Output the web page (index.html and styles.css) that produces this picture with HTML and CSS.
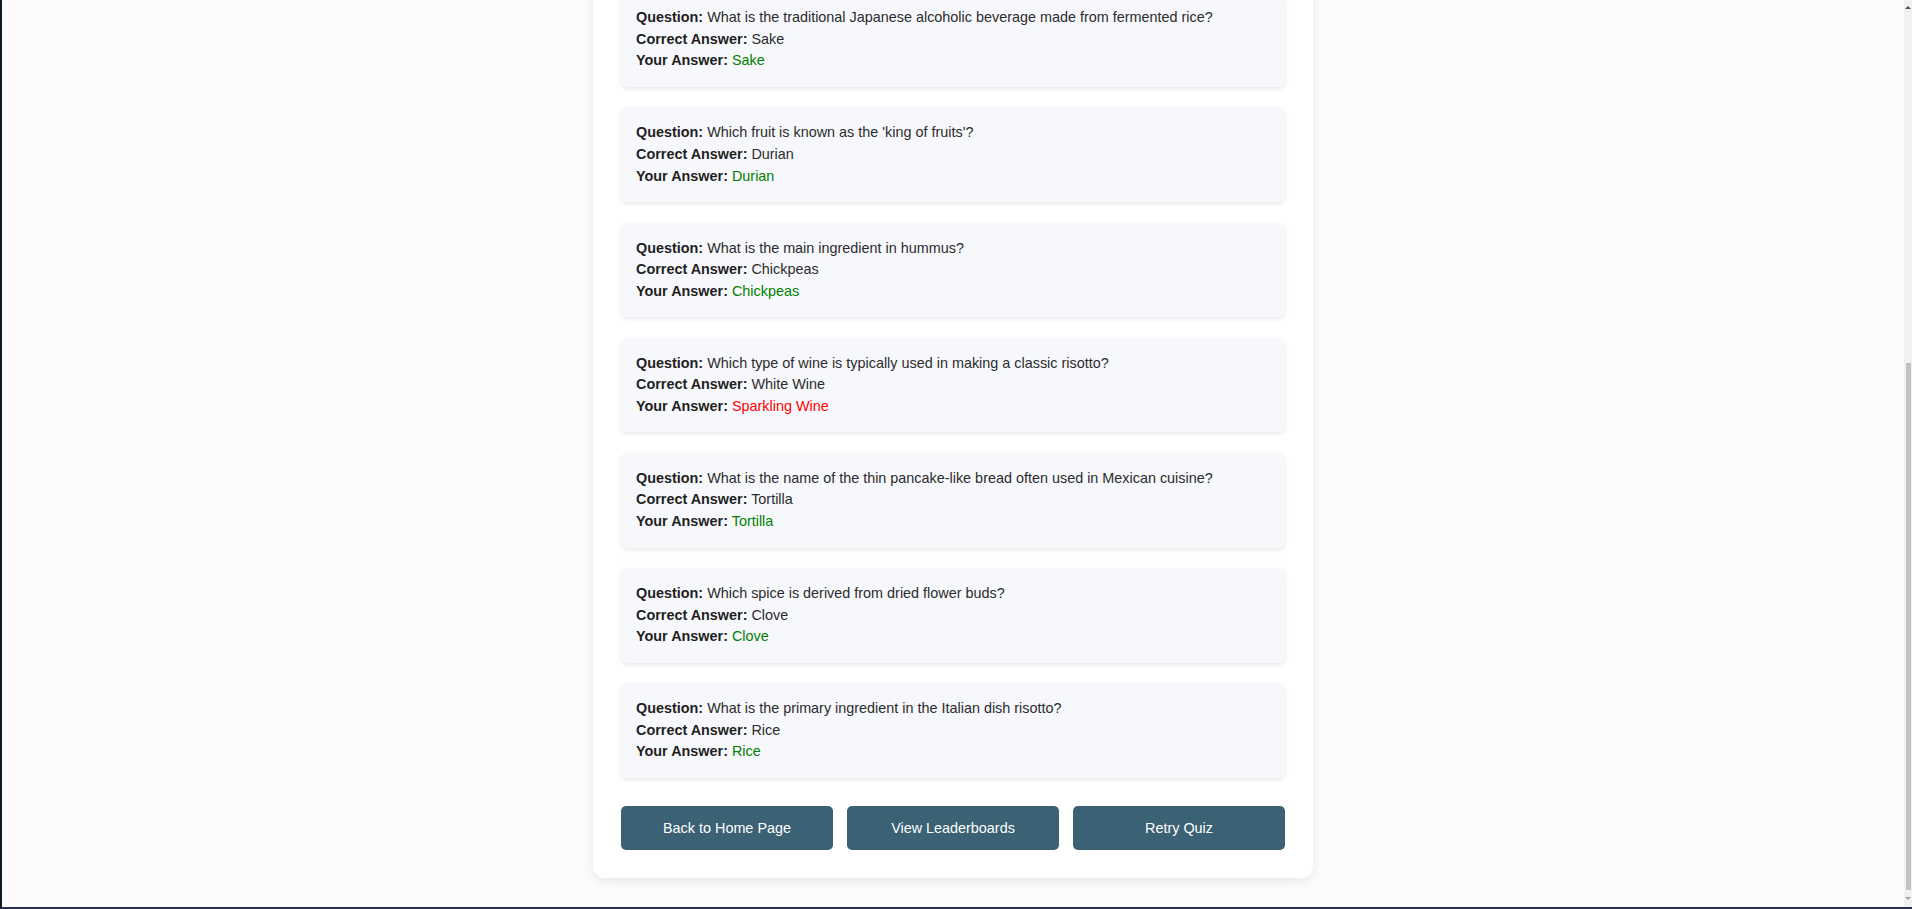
FILE: index.html
```html
<!DOCTYPE html>
<html lang="en">
<head>
<meta charset="utf-8">
<title>Quiz Results</title>
<link rel="stylesheet" href="styles.css">
</head>
<body>
<div class="frame">
  <main class="viewport">
    <section class="results">
      <div class="answers">
        <div class="card">
          <div class="line"><b>Question:</b> What is the traditional Japanese alcoholic beverage made from fermented rice?</div>
          <div class="line"><b>Correct Answer:</b> Sake</div>
          <div class="line"><b>Your Answer:</b> <span class="right">Sake</span></div>
        </div>
        <div class="card">
          <div class="line"><b>Question:</b> Which fruit is known as the 'king of fruits'?</div>
          <div class="line"><b>Correct Answer:</b> Durian</div>
          <div class="line"><b>Your Answer:</b> <span class="right">Durian</span></div>
        </div>
        <div class="card">
          <div class="line"><b>Question:</b> What is the main ingredient in hummus?</div>
          <div class="line"><b>Correct Answer:</b> Chickpeas</div>
          <div class="line"><b>Your Answer:</b> <span class="right">Chickpeas</span></div>
        </div>
        <div class="card">
          <div class="line"><b>Question:</b> Which type of wine is typically used in making a classic risotto?</div>
          <div class="line"><b>Correct Answer:</b> White Wine</div>
          <div class="line"><b>Your Answer:</b> <span class="wrong">Sparkling Wine</span></div>
        </div>
        <div class="card">
          <div class="line"><b>Question:</b> What is the name of the thin pancake-like bread often used in Mexican cuisine?</div>
          <div class="line"><b>Correct Answer:</b> Tortilla</div>
          <div class="line"><b>Your Answer:</b> <span class="right">Tortilla</span></div>
        </div>
        <div class="card">
          <div class="line"><b>Question:</b> Which spice is derived from dried flower buds?</div>
          <div class="line"><b>Correct Answer:</b> Clove</div>
          <div class="line"><b>Your Answer:</b> <span class="right">Clove</span></div>
        </div>
        <div class="card">
          <div class="line"><b>Question:</b> What is the primary ingredient in the Italian dish risotto?</div>
          <div class="line"><b>Correct Answer:</b> Rice</div>
          <div class="line"><b>Your Answer:</b> <span class="right">Rice</span></div>
        </div>
      </div>
      <div class="actions">
        <button class="btn">Back to Home Page</button>
        <button class="btn">View Leaderboards</button>
        <button class="btn">Retry Quiz</button>
      </div>
    </section>
  </main>
  <div class="scrollbar">
    <div class="arrow up"></div>
    <div class="track"><div class="thumb"></div></div>
    <div class="arrow down"></div>
  </div>
</div>
</body>
</html>
```
FILE: styles.css
```css
* { box-sizing: border-box; }
html, body { margin: 0; padding: 0; height: 100%; }
body {
  font-family: "Liberation Sans", Arial, sans-serif;
  background: #fcfcfc;
  overflow: hidden;
}
.frame {
  display: flex;
  height: 909px;
  border-left: 2px solid #0d1a28;
  border-bottom: 2px solid #2a3348;
}
.viewport {
  flex: 1;
  display: flex;
  flex-direction: column;
  justify-content: flex-end;
  align-items: center;
  overflow: hidden;
  padding-bottom: 29px;
}
.results {
  flex-shrink: 0;
  width: 720px;
  background: #ffffff;
  border-radius: 12px;
  box-shadow: 0 4px 12px rgba(0, 0, 0, 0.08);
  padding: 28px 28px 28px 28px;
}
.answers {
  display: flex;
  flex-direction: column;
  gap: 20.4px;
}
.card {
  background: #f7f8fc;
  border-radius: 6px;
  box-shadow: 0 2px 4px rgba(0, 0, 0, 0.09);
  padding: 15px;
  font-size: 14.4px;
  line-height: 21.6px;
  color: #2b2b2b;
}
.card b { color: #1f1f1f; }
.right { color: #008000; }
.wrong { color: #ff0000; }
.actions {
  display: flex;
  gap: 14px;
  margin-top: 28px;
}
.btn {
  flex: 1;
  height: 44px;
  border: none;
  border-radius: 5px;
  background: #3b6174;
  color: #ffffff;
  font-family: "Liberation Sans", Arial, sans-serif;
  font-size: 14.4px;
  cursor: pointer;
}
.scrollbar {
  width: 8px;
  display: flex;
  flex-direction: column;
  background: #f1f1f1;
}
.arrow {
  height: 14px;
  display: flex;
  justify-content: flex-end;
  align-items: center;
}
.arrow.down { height: 17px; }
.arrow::after {
  content: "";
  width: 0;
  height: 0;
  border-left: 3px solid transparent;
  border-right: 3px solid transparent;
  margin-right: 1px;
}
.arrow.up::after { border-bottom: 3px solid #505050; }
.arrow.down::after { border-top: 3px solid #a3a3a3; }
.track {
  flex: 1;
  display: flex;
  flex-direction: column;
  justify-content: flex-end;
  padding: 0 1px 0 2px;
}
.thumb {
  height: 527px;
  background: #c1c1c1;
}
```
